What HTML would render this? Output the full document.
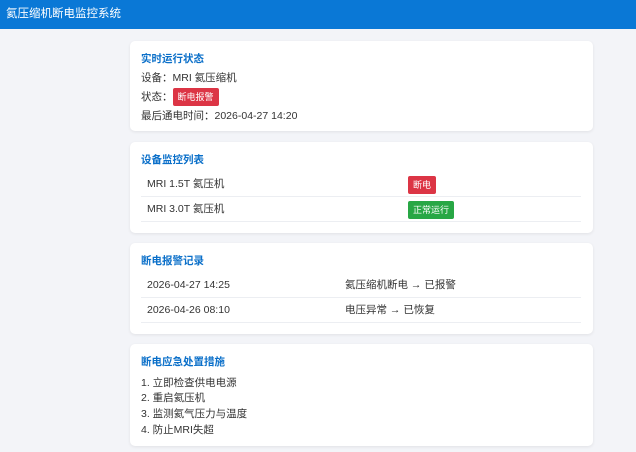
<!DOCTYPE html>
<html><head><meta charset="utf-8"><style>
*{margin:0;padding:0;box-sizing:border-box}
body{width:636px;height:452px;overflow:hidden;background:#f3f4f8;font-family:"Liberation Sans","Noto Sans CJK SC",sans-serif;font-size:10.5px;color:#333}
.hd{height:29px;background:#0a78d6;color:#fff;font-size:11.5px;line-height:29px;padding-left:6px}
.card{position:absolute;left:130px;width:463px;background:#fff;border-radius:5px;box-shadow:0 1px 3px rgba(0,0,0,.08);padding:0 11px}
h3{color:#0a6fc9;font-size:10.5px;font-weight:bold;position:absolute;left:11px}
.l{position:absolute;left:11px;white-space:nowrap}
.b{display:inline-block;color:#fff;font-size:9px;border-radius:2px;padding:0 5px;height:18px;line-height:18px}
.r{background:#dc3545}.g{background:#28a745}
.row{position:absolute;left:11px;width:440px;border-bottom:1px solid #eceef2;height:25px}
.row span{position:absolute;top:0;line-height:25px}
</style></head><body>
<div class="hd">氦压缩机断电监控系统</div>
<div class="card" style="top:41px;height:90px">
<h3 style="top:10px">实时运行状态</h3>
<div class="l" style="top:29px">设备：MRI 氦压缩机</div>
<div class="l" style="top:47px">状态：<span class="b r" style="vertical-align:middle">断电报警</span></div>
<div class="l" style="top:67px">最后通电时间：2026-04-27 14:20</div>
</div>
<div class="card" style="top:142px;height:91px">
<h3 style="top:10px">设备监控列表</h3>
<div class="row" style="top:30px"><span style="left:6px">MRI 1.5T 氦压机</span><span style="left:267px;top:4px;line-height:18px" class="b r">断电</span></div>
<div class="row" style="top:55px"><span style="left:6px">MRI 3.0T 氦压机</span><span style="left:267px;top:4px;line-height:18px" class="b g">正常运行</span></div>
</div>
<div class="card" style="top:243px;height:91px">
<h3 style="top:10px">断电报警记录</h3>
<div class="row" style="top:30px"><span style="left:6px">2026-04-27 14:25</span><span style="left:204px">氦压缩机断电 → 已报警</span></div>
<div class="row" style="top:55px"><span style="left:6px">2026-04-26 08:10</span><span style="left:204px">电压异常 → 已恢复</span></div>
</div>
<div class="card" style="top:344px;height:102px">
<h3 style="top:10px">断电应急处置措施</h3>
<div class="l" style="top:31px">1. 立即检查供电电源</div>
<div class="l" style="top:46px">2. 重启氦压机</div>
<div class="l" style="top:62px">3. 监测氦气压力与温度</div>
<div class="l" style="top:78px">4. 防止MRI失超</div>
</div>
</body></html>
